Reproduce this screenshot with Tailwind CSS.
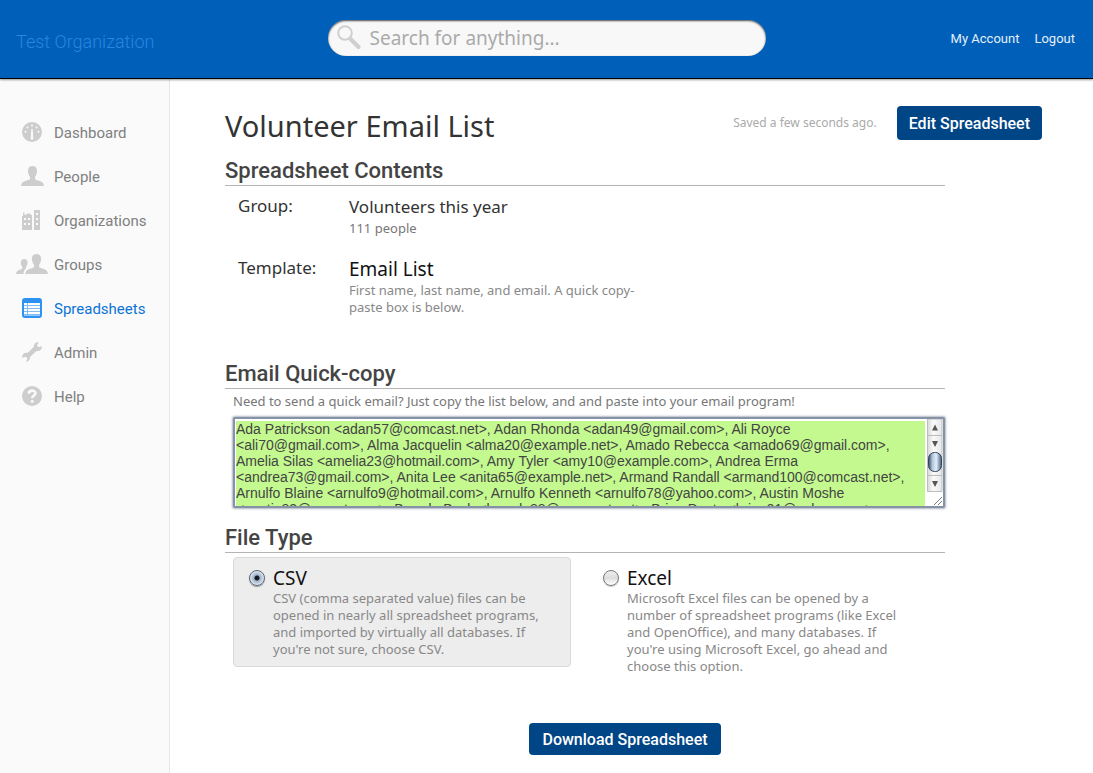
<!DOCTYPE html>
<html lang="en">
<head>
<meta charset="utf-8">
<meta name="viewport" content="width=device-width, initial-scale=1">
<title>Volunteer Email List</title>
<script src="https://cdn.jsdelivr.net/npm/@tailwindcss/browser@4"></script>
</head>
<body class="flex min-h-screen flex-col bg-white font-['Noto_Sans','Open_Sans',sans-serif] text-[#333]">

<header class="relative z-10 grid h-[79px] grid-cols-[1fr_438px_1fr] border-b border-black bg-[#005fb9] shadow-[0_1px_2px_rgba(0,0,0,0.4)]">
  <a href="#" class="mt-7 ml-4 justify-self-start font-['Roboto',sans-serif] text-lg leading-7 font-light text-[#2a86e0]">Test Organization</a>
  <form class="mt-5 flex h-9 items-center gap-1.5 rounded-full bg-[#f8f8f8] pr-5 pl-2 shadow-[inset_0_1px_2px_rgba(0,0,0,0.7)]">
    <svg class="size-7 shrink-0" viewBox="0 0 28 28" fill="none" stroke="#d0d0d0" aria-hidden="true"><circle cx="9" cy="9" r="6.800" stroke-width="2"/><path d="M14.500 15l8 8" stroke-width="4.200" stroke-linecap="round"/></svg>
    <input type="search" aria-label="Search" placeholder="Search for anything..." class="min-w-0 flex-1 bg-transparent text-[19px] leading-7 outline-none placeholder:text-[#aaa]">
  </form>
  <nav class="mt-7 mr-[18px] flex gap-[15px] justify-self-end font-['Roboto',sans-serif] text-[13px] leading-[22px] text-[#e4effa]">
    <a href="#">My Account</a><a href="#">Logout</a>
  </nav>
</header>

<div class="flex flex-1">
  <nav class="w-[170px] shrink-0 border-r border-[#e6e6e6] bg-[#fafafa] pt-[31px] font-['Roboto',sans-serif] text-[15px] text-[#808080]">
    <a href="#" class="flex h-11 items-center gap-1.5 pl-4">
      <svg class="h-5 w-8" viewBox="0 0 32 20" fill="#cdcdcd" aria-hidden="true"><circle cx="16" cy="10" r="10"/><g fill="#fafafa"><path d="M15.300 7h1.400l.6 9.500a1.300 1.300 0 0 1-2.600 0z"/><circle cx="16" cy="3.500" r="1"/><circle cx="11.500" cy="5.500" r="1"/><circle cx="20.500" cy="5.500" r="1"/><circle cx="9.500" cy="9.800" r="1"/><circle cx="22.500" cy="9.800" r="1"/></g></svg><span class="pt-0.5">Dashboard</span></a>
    <a href="#" class="flex h-11 items-center gap-1.5 pl-4">
      <svg class="h-5 w-8" viewBox="0 0 32 20" fill="#cdcdcd" aria-hidden="true"><path d="M16.500 0c3 0 4.500 2 4.500 4.800 0 3-1 4.600-2 6v2.400c2.500 1.300 9 1.800 9 6.800H5c0-5 6.500-5.500 9-6.800v-2.400c-1.200-1.400-2-3-2-6C12 2 13.500 0 16.500 0z"/></svg><span class="pt-0.5">People</span></a>
    <a href="#" class="flex h-11 items-center gap-1.5 pl-4">
      <svg class="h-5 w-8" viewBox="0 0 32 20" fill="#cdcdcd" aria-hidden="true"><path d="M6 20V6h1V2.500h1.500V5H10l1-1.500h3L15 5h1v15zM18 20V0h6v20z"/><path fill="#fafafa" d="M8 8h2v2H8zM12 8h2v2h-2zM8 13h2v2H8zM12 13h2v2h-2zM20 3h2v2h-2zM20 8h2v2h-2zM20 13h2v2h-2z"/></svg><span class="pt-0.5">Organizations</span></a>
    <a href="#" class="flex h-11 items-center gap-1.5 pl-4">
      <svg class="h-5 w-8" viewBox="0 0 32 20" fill="#cdcdcd" aria-hidden="true"><path d="M20.500 0c3 0 4.600 2 4.600 4.800 0 3-1 4.600-2 6v2.400c2.500 1.300 8.900 1.800 8.900 6.800H9.300c0-5 6.400-5.500 8.800-6.800v-2.400c-1.200-1.400-2.200-3-2.200-6C15.900 2 17.500 0 20.500 0z"/><path d="M8.200 5c2.200 0 3.400 1.500 3.400 3.600s-.7 3.200-1.500 4.200v1.500c-1.500 1.200-2.500 2.900-2.600 5.700H0c0-3.800 4.700-4.200 6.300-5.200v-2c-.9-1-1.500-2.200-1.500-4.200C4.800 6.500 6 5 8.200 5z"/></svg><span class="pt-0.5">Groups</span></a>
    <a href="#" aria-current="page" class="flex h-11 items-center gap-1.5 pl-4 text-[#0b74d6]">
      <svg class="h-5 w-8" viewBox="0 0 32 20" aria-hidden="true"><rect x="6" width="20" height="20" rx="3" fill="#2d92f0"/><path fill="#fff" d="M8 5h16v12.500H8z"/><path stroke="#7dbcf7" d="M8 7.500h16M8 10.500h16M8 13.500h16M8 16.500h16M11.500 5v12.500"/></svg><span class="pt-0.5">Spreadsheets</span></a>
    <a href="#" class="flex h-11 items-center gap-1.5 pl-4">
      <svg class="h-5 w-8" viewBox="0 0 32 20" fill="#cdcdcd" aria-hidden="true"><path d="M22.500 0l-1.500 3.500 1.500 1.800L26 4.200c.2 3.200-2.300 5.500-5.600 4.800l-6.400 6c.2 2.700-1.500 4.700-4 5l1.500-3.500-1.500-1.800L6 15.800c0-3.400 2.600-5.500 5.600-4.900l6.300-6.200C17.700 2.200 19.500-.2 22.500 0z"/></svg><span class="pt-0.5">Admin</span></a>
    <a href="#" class="flex h-11 items-center gap-1.5 pl-4">
      <svg class="h-5 w-8" viewBox="0 0 32 20" aria-hidden="true"><circle cx="16" cy="10" r="10" fill="#cdcdcd"/><path d="M12.800 7.800c0-4.300 6.600-4 6.600-.5 0 2.300-3.200 2.200-3.200 4.900" fill="none" stroke="#fafafa" stroke-width="2.600"/><circle cx="16.200" cy="15.300" r="1.500" fill="#fafafa"/></svg><span class="pt-0.5">Help</span></a>
  </nav>

  <main class="min-w-0 flex-1 pt-[27px] pr-[51px] pb-4 pl-[55px]">
    <div class="flex h-[34px] items-center">
      <h1 class="mt-1.5 flex-1 text-[29px] leading-9">Volunteer Email List</h1>
      <p class="mr-5 text-xs text-[#aaa]">Saved a few seconds ago.</p>
      <button type="button" class="h-[34px] rounded bg-[#004586] px-3 pt-0.5 font-['Roboto',sans-serif] text-base font-medium text-white">Edit Spreadsheet</button>
    </div>

    <div class="max-w-[720px]">
      <section class="mt-3.5 h-[203px]">
        <h2 class="border-b border-[#b4b4b4] pt-[3px] font-['Roboto',sans-serif] text-[22px] leading-7 font-medium text-[#444]">Spreadsheet Contents</h2>
        <dl class="grid grid-cols-[111px_310px] pt-2 pl-[13px]">
          <dt class="text-[17px] leading-6">Group:</dt>
          <dd class="h-[62px]"><p class="text-[17px] leading-[26px]">Volunteers this year</p><p class="text-[13px] leading-[17px] text-[#777]">111 people</p></dd>
          <dt class="text-[17px] leading-6">Template:</dt>
          <dd><p class="text-[19px] leading-[26px] text-[#111]">Email List</p><p class="text-[13px] leading-[17px] text-[#888]">First name, last name, and email. A quick copy-paste box is below.</p></dd>
        </dl>
      </section>

      <section class="h-[164px]">
        <h2 class="border-b border-[#b4b4b4] pt-[3px] font-['Roboto',sans-serif] text-[22px] leading-7 font-medium text-[#444]">Email Quick-copy</h2>
        <label for="emails" class="block pl-2 text-[13px] leading-6 text-[#777]">Need to send a quick email? Just copy the list below, and and paste into your email program!</label>
        <div class="relative mt-1 ml-2 flex h-[91px] rounded-xs border-2 border-[#8593a5] bg-white pt-0.5 pl-px shadow-[0_0_2px_1px_rgba(120,135,155,0.6)]">
          <textarea id="emails" readonly class="w-[689px] resize-none overflow-hidden bg-[#c3f98f] font-['Liberation_Sans',sans-serif] text-sm leading-4 text-[#444] outline-none">Ada Patrickson &lt;adan57@comcast.net&gt;, Adan Rhonda &lt;adan49@gmail.com&gt;, Ali Royce
&lt;ali70@gmail.com&gt;, Alma Jacquelin &lt;alma20@example.net&gt;, Amado Rebecca &lt;amado69@gmail.com&gt;,
Amelia Silas &lt;amelia23@hotmail.com&gt;, Amy Tyler &lt;amy10@example.com&gt;, Andrea Erma
&lt;andrea73@gmail.com&gt;, Anita Lee &lt;anita65@example.net&gt;, Armand Randall &lt;armand100@comcast.net&gt;,
Arnulfo Blaine &lt;arnulfo9@hotmail.com&gt;, Arnulfo Kenneth &lt;arnulfo78@yahoo.com&gt;, Austin Moshe
&lt;austin83@qwest.com&gt;, Brenda Buck &lt;brenda88@comcast.net&gt;, Brian Dusty &lt;brian91@yahoo.com&gt;</textarea>
          <svg class="absolute top-0 right-0 h-[87px] w-4" viewBox="0 0 16 87" aria-hidden="true">
            <defs><linearGradient id="track"><stop stop-color="#d8d8d8"/><stop offset=".4" stop-color="#fafafa"/><stop offset="1" stop-color="#e6e6e6"/></linearGradient><linearGradient id="thumb"><stop stop-color="#344a68"/><stop offset=".3" stop-color="#b4c6dc"/><stop offset=".6" stop-color="#e2effa"/><stop offset="1" stop-color="#465c7b"/></linearGradient></defs>
            <path d="M.5 0v72.500H15V0z" fill="url(#track)" stroke="#bdbdbd"/><path d="M1 16.500h14M1 56.500h14" stroke="#bbb"/>
            <path d="M8 5.500l3 6H5zM5 22h6l-3 6zM5 62h6l-3 6z" fill="#555"/>
            <rect x="1.500" y="33.500" width="13" height="19" rx="6" fill="url(#thumb)" stroke="#35435a"/>
            <path d="M7 86l8-8M11 86l4-4" stroke="#777"/>
          </svg>
        </div>
      </section>

      <section>
        <h2 class="border-b border-[#b4b4b4] pt-[3px] font-['Roboto',sans-serif] text-[22px] leading-7 font-medium text-[#444]">File Type</h2>
        <div class="mt-1 ml-2 flex gap-4">
          <label class="flex h-[110px] w-[338px] gap-2 rounded border border-[#d9d9d9] bg-[#ededed] pt-2 pr-5 pl-[15px]">
            <input type="radio" name="type" checked class="mt-1 size-4 shrink-0 appearance-none rounded-full border border-[#596577] bg-[radial-gradient(circle,#151b25_0_2px,#9fb0c4_3px,#dce9f4_7px)] shadow-[0_1px_1px_#999]">
            <span><span class="block text-[19px] leading-6 text-[#111]">CSV</span><span class="block text-[13px] leading-[17px] text-[#888]">CSV (comma separated value) files can be opened in nearly all spreadsheet programs, and imported by virtually all databases. If you're not sure, choose CSV.</span></span>
          </label>
          <label class="flex w-[338px] gap-2 border border-transparent pt-2 pr-4 pl-[15px]">
            <input type="radio" name="type" class="mt-1 size-4 shrink-0 appearance-none rounded-full border border-[#777] bg-[linear-gradient(#eee,#ddd_50%,#fff)] shadow-[0_1px_1px_#ccc]">
            <span><span class="block text-[19px] leading-6 text-[#111]">Excel</span><span class="block text-[13px] leading-[17px] text-[#888]">Microsoft Excel files can be opened by a<br>number of spreadsheet programs (like Excel<br>and OpenOffice), and many databases. If<br>you're using Microsoft Excel, go ahead and<br>choose this option.</span></span>
          </label>
        </div>
      </section>
    </div>
    <div class="mt-[47px] flex max-w-[800px] justify-center">
      <button type="button" class="h-8 rounded bg-[#004586] px-[13px] pt-0.5 font-['Roboto',sans-serif] text-base font-medium text-white">Download Spreadsheet</button>
    </div>
  </main>
</div>
</body>
</html>
